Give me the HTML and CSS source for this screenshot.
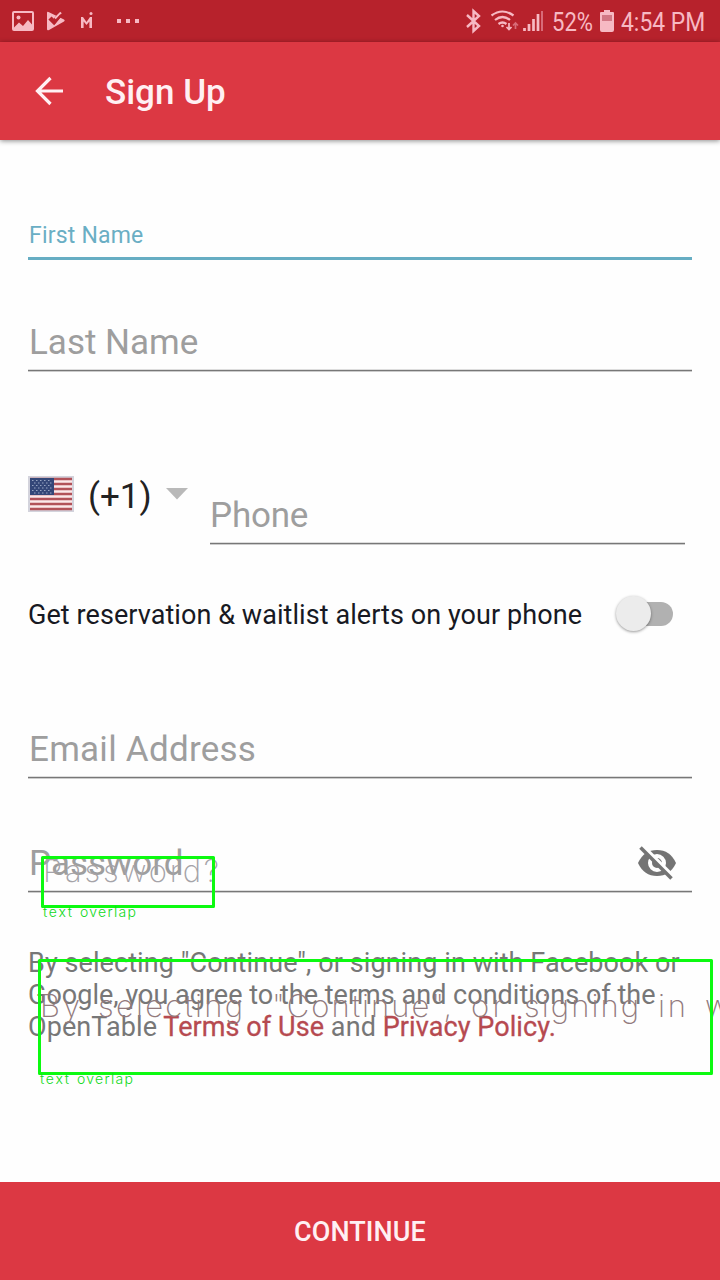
FILE: index.html
```html
<!DOCTYPE html>
<html lang="en">
<head>
<meta charset="utf-8">
<title>Sign Up</title>
<link rel="stylesheet" href="styles.css">
</head>
<body>
<div class="screen">
  <header class="status">
    <svg class="status-icons" width="150" height="42" viewBox="0 0 150 42" fill="#f7b9c3">
      <path fill-rule="evenodd" d="M14 11h18q2 0 2 2v16q0 2-2 2H14q-2 0-2-2V13q0-2 2-2zm0 2v14.500l5-5 4 3.500 5-6 4 4.500V13z"/>
      <circle cx="18.500" cy="17.500" r="2"/>
      <path d="M48.500 12L64 19.500q1.500 1 0 2L49 30q-2 1-2-1V13q0-2 1.500-1z"/>
      <path fill="none" stroke="#b7222c" stroke-width="4.500" d="M50 18l4 4 9-11"/>
      <path fill="none" stroke="#f7b9c3" stroke-width="2.200" d="M55 18.500l6-6"/>
      <path fill="none" stroke="#b7222c" stroke-width="2" d="M50 19l4.500 4L61 15"/>
      <path d="M81 28V17h2l3.500 5 3.500-5h2v11h-2.600v-6.500L86.500 25l-2.900-3.500V28z"/>
      <circle cx="91" cy="13.500" r="1.500"/>
      <path d="M117 19h4v4h-4zM126 19h4v4h-4zM135 19h4v4h-4z"/>
    </svg>
    <div class="status-right">
      <svg width="80" height="42" viewBox="465 0 80 42" fill="none" stroke="#f7b9c3">
        <path stroke-width="2.400" d="M467 15l12 11-5.500 5V11l5.500 5-12 11"/>
        <path stroke-width="2.200" d="M491.500 15.500q11-8 22 0M495 20q7.500-6 15 0M498.500 24q4-3 8 0"/>
        <circle cx="502.500" cy="26" r="1.300" fill="#f7b9c3" stroke="none"/>
        <path stroke-width="1.700" d="M509 23v6M506.500 27l2.500 2.500 2.500-2.500"/>
        <path stroke="#d86b78" stroke-width="1.700" d="M515.500 29v-6M513 25.500l2.500-2.500 2.500 2.500"/>
        <path stroke-width="2.700" d="M524.500 31v-3M529 31v-7M533.500 31v-12M538 31v-17"/>
        <path stroke="#d86b78" stroke-width="2" d="M542 31V11"/>
      </svg>
      <span class="percent">52%</span>
      <svg class="battery" width="14" height="24" viewBox="0 0 14 24">
        <path fill="#f7b9c3" d="M4 1h6v2h3q1 0 1 1v17q0 2-2 2H2q-2 0-2-2V4q0-1 1-1h3z"/>
        <path fill="#d27784" d="M2 6h10v6H2z"/>
      </svg>
      <span class="clock">4:54 PM</span>
    </div>
  </header>
  <div class="appbar">
    <svg class="back" width="30" height="30" viewBox="0 0 30 30" fill="none" stroke="#fff0f3" stroke-width="3.200">
      <path d="M29 15H4M16.500 2L3.500 15l13 13"/>
    </svg>
    <h1 class="title">Sign Up</h1>
  </div>
  <main class="form">
    <div class="field first"><span class="label">First Name</span></div>
    <div class="field last"><span class="hint">Last Name</span></div>
    <div class="phone-row">
      <div class="country">
        <svg class="flag" width="46" height="36" viewBox="0 0 46 36">
          <path fill="#d3d3dc" d="M0 0h46v36H0z"/>
          <path fill="#fbe9ea" d="M2 2h42v32H2z"/>
          <path stroke="#b25259" stroke-width="2.300" d="M2 3h42M2 8h42M2 13h42M2 18h42M2 23h42M2 28h42M2 33h42"/>
          <path fill="#344778" d="M2 2h24v17H2z"/>
          <path stroke="#98a6c3" stroke-width="1" stroke-dasharray="1.500 2.500" d="M4 4.500h20M6 7h18M4 9.500h20M6 12h18M4 14.500h20M6 17h18"/>
        </svg>
        <span class="code">(+1)</span>
        <svg class="caret" width="24" height="12" viewBox="0 0 24 12"><path fill="#b9b9b9" d="M1 0h22L12 11.500z"/></svg>
      </div>
      <div class="field phone"><span class="hint">Phone</span></div>
    </div>
    <div class="alerts">
      <span class="alerts-text">Get reservation &amp; waitlist alerts on your phone</span>
      <div class="toggle"><div class="knob"></div></div>
    </div>
    <div class="field email"><span class="hint">Email Address</span></div>
    <div class="field password">
      <span class="hint">Password</span>
      <svg class="eye" width="40" height="36" viewBox="0 0 40 36">
        <path fill="#747474" d="M1 18Q7 5 20 5t19 13Q33 31 20 31T1 18z"/>
        <circle cx="20" cy="18" r="7" fill="none" stroke="#fff" stroke-width="4"/>
        <path stroke="#fff" stroke-width="3.500" d="M6 1l31 31"/>
        <path stroke="#747474" stroke-width="3.500" d="M3.500 2.500l31 31"/>
      </svg>
    </div>
    <p class="terms"><span class="line">By selecting "Continue", or signing in with Facebook or</span><span class="line second">Google, you agree to the terms and conditions of the</span><span class="line">OpenTable <a class="link">Terms of Use</a> and <a class="link">Privacy Policy.</a></span></p>
  </main>
  <footer class="continue">CONTINUE</footer>
  <svg class="marks" width="720" height="260" viewBox="0 840 720 260">
    <g class="thin">
      <text x="43" y="882" fill="#a5a3a8" textLength="176">Password?</text>
      <text y="1017" fill="#927a7d"><tspan x="40" textLength="40">By</tspan> <tspan x="98" textLength="145">selecting</tspan> <tspan x="272" textLength="180">"Continue",</tspan> <tspan x="471" textLength="32">or</tspan> <tspan x="524" textLength="115">signing</tspan> <tspan x="658" textLength="28">in</tspan> <tspan x="705">w</tspan></text>
    </g>
    <g fill="none" stroke="#0cfa10" stroke-width="3" stroke-linejoin="round">
      <rect x="42.500" y="857.500" width="171" height="49"/>
      <rect x="39.500" y="960.500" width="672" height="113"/>
    </g>
    <g class="caption">
      <text y="917"><tspan x="43" textLength="29">text</tspan> <tspan x="80" textLength="56">overlap</tspan></text>
      <text y="1084"><tspan x="40" textLength="29">text</tspan> <tspan x="77" textLength="56">overlap</tspan></text>
    </g>
  </svg>
</div>
</body>
</html>
```
FILE: styles.css
```css
body { margin: 0; background: #fefefe; font-family: Roboto, "Liberation Sans", sans-serif; }
.screen { position: relative; width: 720px; height: 1280px; display: flex; flex-direction: column; overflow: hidden; background: #fefefe; }
.status { height: 42px; flex: none; background: #b7222c; display: flex; justify-content: space-between; color: #f7b9c3; }
.status-right { display: flex; align-items: center; padding-right: 15px; font-size: 26px; line-height: 42px; }
.percent, .clock { display: block; white-space: nowrap; padding-top: 2px; transform-origin: left center; }
.percent { width: 41px; margin-left: 7px; transform: scaleX(.85); }
.battery { margin: 0 7px; }
.clock { width: 84px; transform: scaleX(.88); }
.appbar { height: 98px; flex: none; background: #dc3843; display: flex; align-items: center; box-shadow: 0 1px 5px rgba(0,0,0,.45); color: #fff0f3; }
.back { margin-left: 34px; }
.title { margin: 4px 0 0 41px; font-size: 35px; font-weight: 500; line-height: 42px; }
.form { flex: 1; padding: 0 28px; display: flex; flex-direction: column; }
.field { box-sizing: border-box; display: flex; align-items: flex-end; justify-content: space-between; border-bottom: 1px solid #777; box-shadow: 0 1px #ccc, inset 0 -1px #ddd; padding: 0 0 6px 1px; }
.hint { font-size: 35px; line-height: 42px; color: #9e9e9e; white-space: nowrap; }
.first { height: 120px; border-bottom: 3px solid #66adc3; box-shadow: none; padding-bottom: 8px; }
.label { font-size: 23px; line-height: 27px; letter-spacing: .2px; color: #6aaec4; }
.last { height: 111px; }
.phone-row { display: flex; height: 173px; }
.country { width: 182px; display: flex; align-items: flex-start; padding-top: 105px; box-sizing: border-box; }
.code { font-size: 35px; line-height: 42px; color: #222; margin: 0 0 0 14px; width: 64px; }
.caret { margin: 12px 0 0 13px; }
.phone { width: 475px; padding-left: 0; }
.phone .hint { letter-spacing: -.2px; }
.email .hint { letter-spacing: .25px; }
.alerts { height: 141px; display: flex; justify-content: space-between; box-sizing: border-box; padding: 50px 19px 0 0; }
.alerts-text { font-size: 27px; line-height: 42px; letter-spacing: .07px; color: #171923; white-space: nowrap; }
.toggle { width: 53px; height: 24px; border-radius: 12px; background: #b1b1b1; margin-top: 8px; }
.knob { width: 35px; height: 35px; border-radius: 50%; background: #ececec; box-shadow: 0 1px 3px rgba(0,0,0,.4); margin: -6px 0 0 -4px; }
.email { height: 93px; }
.password { height: 114px; }
.eye { margin: 0 15px 4px 0; }
.terms { margin: 55px 0 0; font-size: 27px; line-height: 32px; letter-spacing: .08px; color: #777; }
.line { display: block; white-space: nowrap; }
.second { letter-spacing: .02px; }
.link { color: #b64a50; -webkit-text-stroke: .3px #b64a50; }
.continue { height: 98px; flex: none; background: #dc3843; color: #fff0f3; font-size: 27px; font-weight: 500; line-height: 100px; letter-spacing: .1px; text-align: center; }
.marks { position: absolute; left: 0; top: 840px; pointer-events: none; }
.thin { font-family: Inter, Roboto, sans-serif; font-weight: 200; font-size: 31px; }
.caption { font-family: Inter, Roboto, sans-serif; font-weight: 300; font-size: 14px; fill: #10d91a; }
```
